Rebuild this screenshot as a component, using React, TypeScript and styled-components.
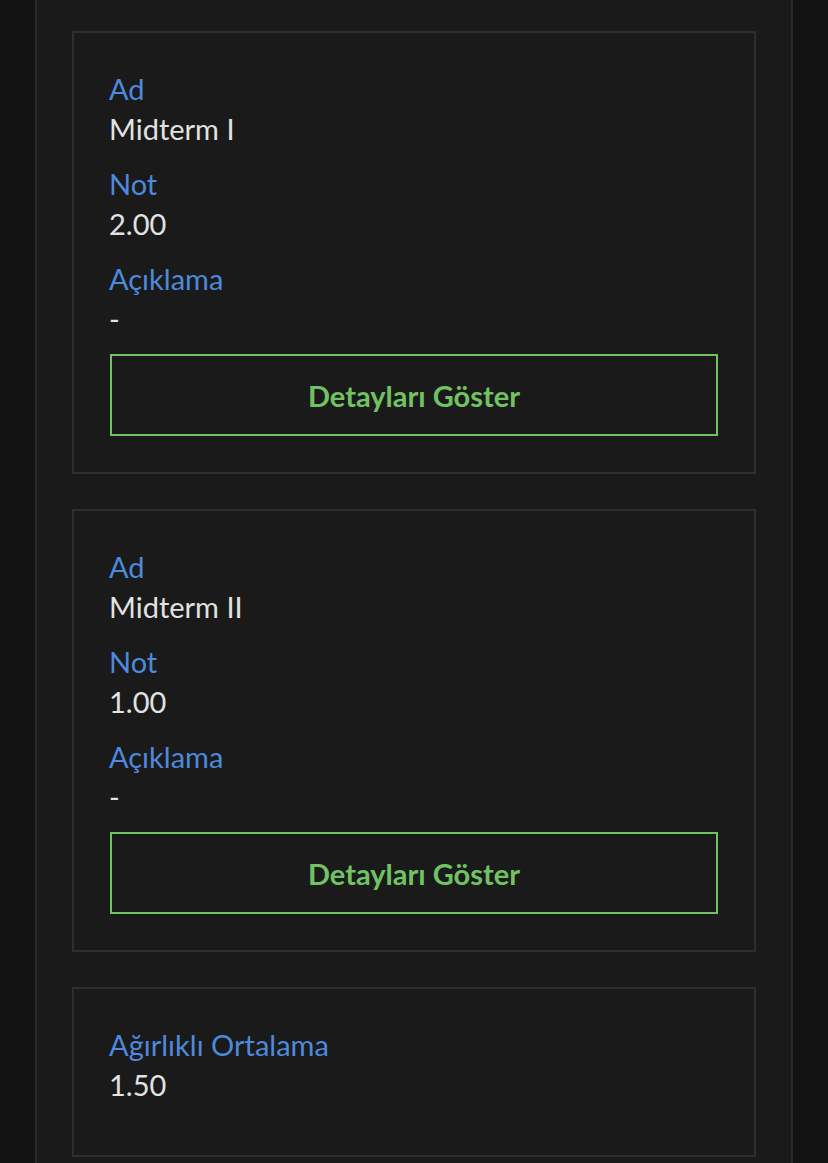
import React from "react";
import styled, { createGlobalStyle } from "styled-components";

const GlobalStyle = createGlobalStyle`
  html, body {
    margin: 0;
    padding: 0;
    background: #121212;
    overflow: hidden;
  }
  body {
    font-family: "Lato", "Noto Sans", sans-serif;
  }
`;

const Page = styled.div`
  width: 828px;
  height: 1163px;
  overflow: hidden;
  background: #121212;
`;

const Panel = styled.div`
  margin: -40px 35px 0 35px;
  padding: 69px 35px 40px 35px;
  background: #1a1a1a;
  border: 2px solid #2a2a2a;
  display: flex;
  flex-direction: column;
  gap: 35px;
`;

const Card = styled.section<{ $bottom?: number }>`
  border: 2px solid #2e2e2e;
  background: #1a1a1a;
  padding: 36px 36px ${(p) => p.$bottom ?? 21}px 35px;
  display: flex;
  flex-direction: column;
`;

const Field = styled.div`
  display: flex;
  flex-direction: column;
  margin-bottom: 15px;
`;

const Label = styled.div`
  color: #4d89dc;
  font-size: 29px;
  line-height: 40px;
`;

const Value = styled.div`
  color: #e2e2e2;
  font-size: 29px;
  line-height: 40px;
`;

const Button = styled.button`
  height: 82px;
  margin: 0 0 15px 1px;
  background: transparent;
  border: 2px solid #71c263;
  color: #71c263;
  font-family: "Lato", "Noto Sans", sans-serif;
  font-weight: 700;
  font-size: 29px;
  cursor: pointer;
  padding: 0;
`;

type Item = { name: string; grade: string; note: string };

const items: Item[] = [
  { name: "Midterm I", grade: "2.00", note: "-" },
  { name: "Midterm II", grade: "1.00", note: "-" },
];

export default function App() {
  return (
    <Page>
      <GlobalStyle />
      <Panel>
        {items.map((it) => (
          <Card key={it.name}>
            <Field>
              <Label>Ad</Label>
              <Value>{it.name}</Value>
            </Field>
            <Field>
              <Label>Not</Label>
              <Value>{it.grade}</Value>
            </Field>
            <Field>
              <Label>Açıklama</Label>
              <Value>{it.note}</Value>
            </Field>
            <Button>Detayları Göster</Button>
          </Card>
        ))}
        <Card $bottom={35}>
          <Field>
            <Label>Ağırlıklı Ortalama</Label>
            <Value>1.50</Value>
          </Field>
        </Card>
      </Panel>
    </Page>
  );
}
